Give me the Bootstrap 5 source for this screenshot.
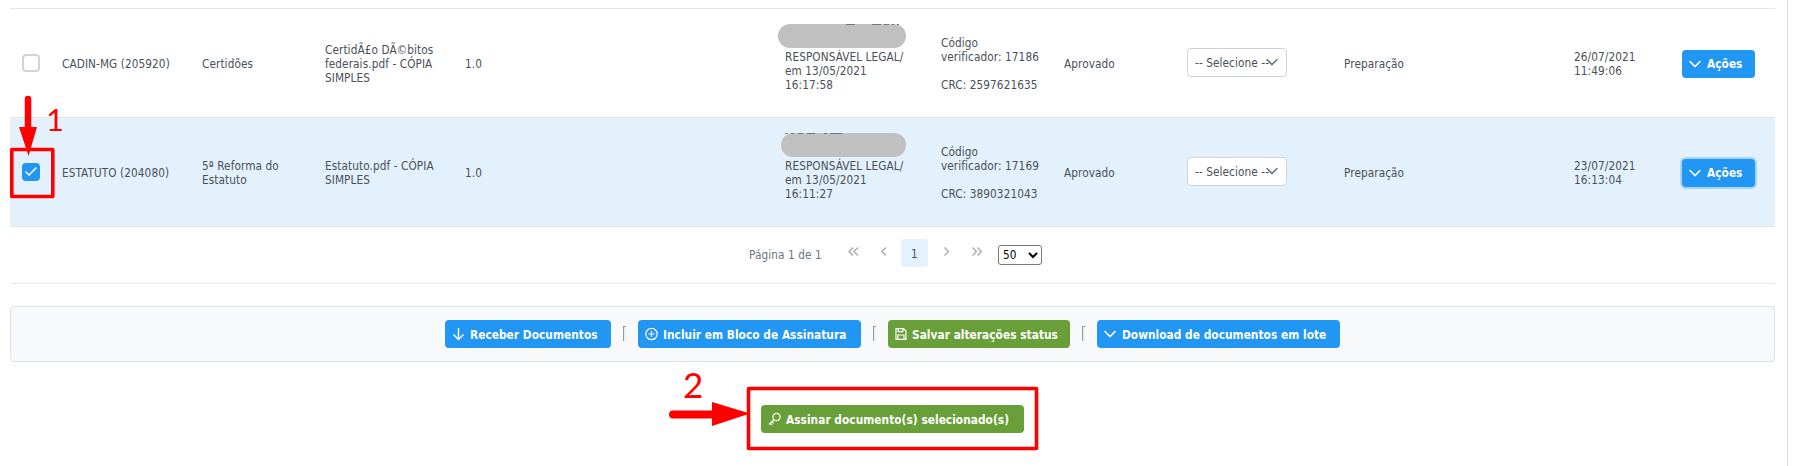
<!DOCTYPE html>
<html lang="pt-BR">
<head>
<meta charset="utf-8">
<title>Documentos</title>
<link href="https://cdn.jsdelivr.net/npm/bootstrap@5.3.0/dist/css/bootstrap.min.css" rel="stylesheet">
<style>
body{font-family:"DejaVu Sans Condensed","DejaVu Sans",sans-serif;font-stretch:condensed;font-size:11.7px;letter-spacing:.09px;line-height:14px;color:#495057;background:#fff;overflow:hidden}
.page-pane{width:1788px;height:466px;border-right:1px solid #dcdcdc;padding:8px 12px 0 10px}
.doc-table{table-layout:fixed;width:1765px;border-top:1px solid #e4e7ea;margin:0;color:#495057}
.doc-table td{height:109px;padding:1px 0 0 12px;border:0;border-bottom:1px solid #e4e7ea;vertical-align:middle;white-space:nowrap;background:none;color:#495057;box-shadow:none}
.doc-table tr.chosen td{background:#e3f1fd}
.doc-table .form-check-input{display:block;width:18px;height:18px;margin:-1px 0 0;border:2px solid #ced4da;border-radius:4px;background-size:15px}
.doc-table .form-check-input:checked{background-color:#2196f3;border-color:#2196f3;background-image:none}
.tick-box{width:18px;height:18px}
.tick-box svg{left:2px;top:2px}
.status-pick{width:100px;height:29px;margin-top:-2px;padding:0 8px 0 7px;border:1px solid #ced4da;border-radius:4px;background:#fff}
.status-pick svg{right:8px;top:7px}
.act{height:28px;border:0;border-radius:4px;padding:1px 0 0 7px;font-size:11.8px;letter-spacing:.03px;font-weight:700;line-height:14px;color:#fff;background:#2196f3;text-align:left;display:flex;align-items:center;white-space:nowrap}
.act:hover{color:#fff;background:#2196f3}
.act svg{flex:none;margin-top:-1px}
.act-green,.act-green:hover{background:#689f38}
.act-focus{box-shadow:0 0 0 2px #a6d5fa}
.redact{left:-7px;top:2px;width:128px;height:24px}
.pager{height:57px;padding-left:6px;border-bottom:1px solid #e4e7ea;color:#6c757d}
.pager-label{width:73px;white-space:nowrap}
.pager-step{margin-bottom:4px}
.pager-num{width:27px;height:28px;margin-bottom:4px;padding-top:2px;border-radius:4px;background:#e3f2fd;color:#495057}
.pager select{width:44px;height:20px;border:1px solid #767676;border-radius:3px;background:#fff;color:#000;font-size:11.7px;padding:0 0 0 4px;appearance:none}
.tools{height:56px;margin-top:22px;border:1px solid #dee2e6;border-radius:4px;background:#f8f9fa}
.tool-sep{width:27px;display:flex;justify-content:center}
.tool-sep i{width:3px;height:15px;margin-top:-2px;border-left:1px solid #999;border-top:1px solid #999;background:#eee}
.marks{left:0;top:0;pointer-events:none}
.marks text{font-family:Lato,sans-serif;fill:#f00}
.w-a{width:73px}.w-b{width:166px}.w-c{width:223px}.w-d{width:182px}.w-e{width:243px}.w-f{width:263px}
.act-chev{margin-right:6px}
.sign-row{margin-top:43px}
</style>
</head>
<body>
<svg class="d-none">
<symbol id="down" viewBox="0 0 12 12"><path d="M1 3.5 6 8.5 11 3.5" fill="none" stroke="currentColor" stroke-width="1.6" stroke-linecap="round"/></symbol>
</svg>
<main class="page-pane position-relative">
<table class="table doc-table">
<colgroup><col style="width:40px"><col style="width:140px"><col style="width:123px"><col style="width:140px"><col style="width:320px"><col style="width:156px"><col style="width:123px"><col style="width:123px"><col style="width:157px"><col style="width:230px"><col style="width:108px"><col style="width:105px"></colgroup>
<tbody>
<tr>
<td><input class="form-check-input" type="checkbox"></td>
<td>CADIN-MG (205920)</td>
<td>Certidões</td>
<td>CertidÃ£o DÃ©bitos<br>federais.pdf - CÓPIA<br>SIMPLES</td>
<td>1.0</td>
<td><div class="position-relative"><svg class="redact position-absolute" viewBox="0 0 128 24"><rect width="128" height="24" rx="12" fill="#c0c0c0"/><path d="M68 .5h9M94 .5h9M106 .5h5M114 .5h2M119 .5h2" stroke="#777"/></svg><br><br>RESPONSÁVEL LEGAL/<br>em 13/05/2021<br>16:17:58<br>&nbsp;</div></td>
<td>Código<br>verificador: 17186<br><br>CRC: 2597621635</td>
<td>Aprovado</td>
<td><div class="status-pick position-relative d-flex align-items-center">-- Selecione --<svg class="position-absolute" width="12" height="12" color="#6c757d"><use href="#down"/></svg></div></td>
<td>Preparação</td>
<td>26/07/2021<br>11:49:06</td>
<td><button class="btn act w-a"><svg class="act-chev" width="12" height="12"><use href="#down"/></svg>Ações</button></td>
</tr>
<tr class="chosen">
<td><div class="tick-box position-relative"><input class="form-check-input" type="checkbox" checked><svg class="position-absolute" width="14" height="14"><path d="M1.5 6.500 5 10 12.500 2.500" fill="none" stroke="#fff" stroke-width="1.5"/></svg></div></td>
<td>ESTATUTO (204080)</td>
<td>5ª Reforma do<br>Estatuto</td>
<td>Estatuto.pdf - CÓPIA<br>SIMPLES</td>
<td>1.0</td>
<td><div class="position-relative"><svg class="redact position-absolute" viewBox="0 0 128 24"><rect x="3" width="125" height="24" rx="12" fill="#c0c0c0"/><path d="M7 .5h3M13 .5h3M20 .5h5M29 .5h8M46 .5h3M52 .5h12" stroke="#777"/></svg><br><br>RESPONSÁVEL LEGAL/<br>em 13/05/2021<br>16:11:27<br>&nbsp;</div></td>
<td>Código<br>verificador: 17169<br><br>CRC: 3890321043</td>
<td>Aprovado</td>
<td><div class="status-pick position-relative d-flex align-items-center">-- Selecione --<svg class="position-absolute" width="12" height="12" color="#6c757d"><use href="#down"/></svg></div></td>
<td>Preparação</td>
<td>23/07/2021<br>16:13:04</td>
<td><button class="btn act act-focus w-a"><svg class="act-chev" width="12" height="12"><use href="#down"/></svg>Ações</button></td>
</tr>
</tbody>
</table>
<div class="pager d-flex justify-content-center align-items-center">
<span class="pager-label">Página 1 de 1</span>
<svg class="pager-step" width="79" height="28" fill="none" stroke="#a6abb0" stroke-width="1.4"><path d="m31 8.500-4 4 4 4m5-8-4 4 4 4m28-8-4 4 4 4"/></svg>
<span class="pager-num d-flex justify-content-center align-items-center">1</span>
<svg class="pager-step" width="70" height="28" fill="none" stroke="#a6abb0" stroke-width="1.4"><path d="m16.500 8.500 4 4-4 4m28-8 4 4-4 4m5-8 4 4-4 4"/></svg>
<div class="position-relative"><select class="d-block"><option>50</option></select><svg class="position-absolute end-0 top-0" width="18" height="20"><path d="m5 8 4 4 4-4" fill="none" stroke="#000" stroke-width="2"/></svg></div>
</div>
<div class="tools d-flex justify-content-center align-items-center">
<button class="btn act w-b"><svg width="18" height="14" fill="none" stroke="#fff" stroke-width="1.4"><path d="M6.5 1v11M1.5 7.5l5 5 5-5"/></svg>Receber Documentos</button>
<span class="tool-sep"><i></i></span>
<button class="btn act w-c"><svg width="18" height="14" fill="none" stroke="#fff" stroke-width="1.2"><circle cx="6.5" cy="7" r="5.7"/><path d="M6.5 4v6m-3-3h6"/></svg>Incluir em Bloco de Assinatura</button>
<span class="tool-sep"><i></i></span>
<button class="btn act act-green w-d"><svg width="17" height="14" fill="none" stroke="#fff" stroke-width="1.2"><path d="M1 1.6h7.5L11 4v8.4H1zM3.2 1.6v3h4.6v-3M3 12.4V8h6v4.4"/></svg>Salvar alterações status</button>
<span class="tool-sep"><i></i></span>
<button class="btn act w-e"><svg width="18" height="12"><use href="#down" width="12"/></svg>Download de documentos em lote</button>
</div>
<div class="sign-row d-flex justify-content-center"><button class="btn act act-green w-f"><svg width="18" height="14" fill="none" stroke="#fff" stroke-width="1.2"><circle cx="8.5" cy="5" r="3.6"/><path d="M6 7.5 1 12.5M2.2 11.2l2 2M4 9.500l1.800 1.800"/></svg>Assinar documento(s) selecionado(s)</button></div>
<svg class="marks position-absolute" width="1100" height="466">
<g fill="none" stroke="#f00" stroke-width="3.6" stroke-linejoin="round"><rect x="11.8" y="149.5" width="41" height="47"/><rect x="748.5" y="388.5" width="288" height="60"/></g>
<path d="M28 99v30" stroke="#f00" stroke-width="6.5" stroke-linecap="round"/><path d="M673 414.500h42" stroke="#f00" stroke-width="8" stroke-linecap="round"/>
<path d="M19 127h18l-8.500 29zM712 402v24l38-12.500z" fill="#f00"/>
<text x="46" y="130.500" font-size="31">1</text><text x="683" y="398" font-size="35">2</text>
</svg>
</main>
<script src="https://cdn.jsdelivr.net/npm/bootstrap@5.3.0/dist/js/bootstrap.bundle.min.js"></script>
</body>
</html>
